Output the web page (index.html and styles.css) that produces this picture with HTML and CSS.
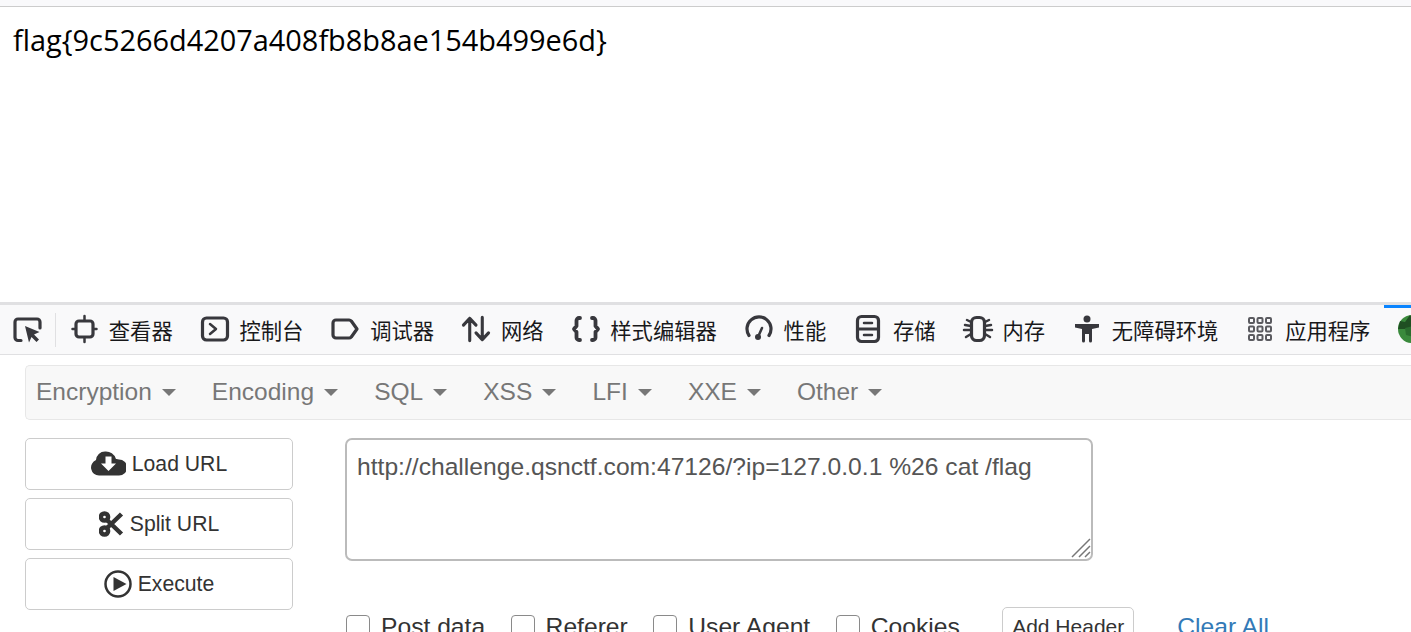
FILE: index.html
```html
<!DOCTYPE html>
<html lang="en">
<head>
  <meta charset="UTF-8" />
  <meta name="viewport" content="width=device-width, initial-scale=1" />
  <title>flag</title>
  <link rel="stylesheet" href="styles.css">
</head>
<body>

<div class="browser-edge"></div>
<div class="page-output">flag{9c5266d4207a408fb8b8ae154b499e6d}</div>

<div class="devtools">
  <div class="tabs">
    <div class="picker">
      <svg width="29" height="26" viewBox="0 0 29 26">
        <path class="ic" d="M8 23.500H5a3 3 0 0 1-3-3V5a3 3 0 0 1 3-3h19a3 3 0 0 1 3 3v6"/>
        <path class="ic-fill" d="M12 9l14.500 6-5.500 2.500 5 5-2.500 2.500-5-5-2.500 5.500z"/>
      </svg>
    </div>
    <div class="tab">
      <svg width="26" height="28" viewBox="0 0 26 28">
        <rect class="ic" x="5" y="6" width="17" height="16" rx="3"/>
        <path class="ic-thin" d="M13.500 1v4M13.500 23v4M1.500 14h3M22.500 14h3"/>
      </svg>
      <span>查看器</span>
    </div>
    <div class="tab">
      <svg width="28" height="26" viewBox="0 0 28 26">
        <rect class="ic" x="1.500" y="2" width="25" height="22" rx="4"/>
        <path class="ic-thin" d="M9 8l6 5-6 5"/>
      </svg>
      <span>控制台</span>
    </div>
    <div class="tab">
      <svg width="28" height="22" viewBox="0 0 28 22">
        <path class="ic" d="M5 2h13a3 3 0 0 1 2.300 1L26 11l-5.700 8a3 3 0 0 1-2.300 1H5a3 3 0 0 1-3-3V5a3 3 0 0 1 3-3z"/>
      </svg>
      <span>调试器</span>
    </div>
    <div class="tab">
      <svg width="29" height="28" viewBox="0 0 29 28">
        <path class="ic" d="M8 26V3M1.500 10L8 3l6.500 7M21 2v23M14.500 18l6.500 7 6.500-7"/>
      </svg>
      <span>网络</span>
    </div>
    <div class="tab">
      <svg width="26" height="26" viewBox="0 0 26 26">
        <path class="ic ic-bold" d="M7 2H6a2.500 2.500 0 0 0-2.500 2.500v5.500L1 13l2.500 3v5.500A2.500 2.500 0 0 0 6 24h1M19 2h1a2.500 2.500 0 0 1 2.500 2.500v5.500L25 13l-2.500 3v5.500A2.500 2.500 0 0 1 20 24h-1"/>
      </svg>
      <span>样式编辑器</span>
    </div>
    <div class="tab">
      <svg width="28" height="26" viewBox="0 0 28 26">
        <path class="ic" d="M4 19.500A12 12 0 1 1 24 19.500"/>
        <circle class="ic-fill" cx="13" cy="21" r="3"/>
        <path class="ic-thin" d="M13 21l4-9"/>
      </svg>
      <span>性能</span>
    </div>
    <div class="tab">
      <svg width="24" height="28" viewBox="0 0 24 28">
        <rect class="ic" x="1.500" y="1.500" width="21" height="25" rx="4"/>
        <path class="ic" d="M2 14h20"/>
        <path class="ic-thin" d="M8 8h8M8 20h8"/>
      </svg>
      <span>存储</span>
    </div>
    <div class="tab">
      <svg width="28" height="26" viewBox="0 0 28 26">
        <rect class="ic" x="7.500" y="1.500" width="13" height="23" rx="5"/>
        <path class="ic-thin" d="M7 6L3 4M7 10L1 9M7 14H0M7 18l-5 3M21 6l4-2M21 10l6-1M21 14h7M21 18l5 3"/>
      </svg>
      <span>内存</span>
    </div>
    <div class="tab">
      <svg width="26" height="28" viewBox="0 0 26 28">
        <circle class="ic-fill" cx="13" cy="4" r="3.500"/>
        <path class="ic-fill" d="M1 9h24v3.500l-7 1.500v12a1.500 1.500 0 0 1-3 0v-7h-4v7a1.500 1.500 0 0 1-3 0V14l-7-1.500z"/>
      </svg>
      <span>无障碍环境</span>
    </div>
    <div class="tab">
      <svg width="24" height="24" viewBox="0 0 24 24">
        <g class="ic-grid">
          <rect x="1" y="1" width="5" height="5" rx="1"/><rect x="9.500" y="1" width="5" height="5" rx="1"/><rect x="18" y="1" width="5" height="5" rx="1"/>
          <rect x="1" y="9.500" width="5" height="5" rx="1"/><rect x="9.500" y="9.500" width="5" height="5" rx="1"/><rect x="18" y="9.500" width="5" height="5" rx="1"/>
          <rect x="1" y="18" width="5" height="5" rx="1"/><rect x="9.500" y="18" width="5" height="5" rx="1"/><rect x="18" y="18" width="5" height="5" rx="1"/>
        </g>
      </svg>
      <span>应用程序</span>
    </div>
    <div class="tab tab-active">
      <svg width="28" height="28" viewBox="0 0 28 28">
        <circle cx="14" cy="14" r="14" fill="#3a8a3c"/>
        <path d="M2 6l5 1 5-7 4 6 8-2 3 10H0z" fill="#1f4f22"/>
        <path d="M7 13l8-2 5 5-4 6-8-2z" fill="#2a6d2e"/>
      </svg>
    </div>
  </div>
</div>

<div class="hackbar">
  <nav class="menu">
    <span class="menu-item">Encryption<i class="caret"></i></span>
    <span class="menu-item">Encoding<i class="caret"></i></span>
    <span class="menu-item">SQL<i class="caret"></i></span>
    <span class="menu-item">XSS<i class="caret"></i></span>
    <span class="menu-item">LFI<i class="caret"></i></span>
    <span class="menu-item">XXE<i class="caret"></i></span>
    <span class="menu-item">Other<i class="caret"></i></span>
  </nav>

  <div class="panel">
    <div class="actions">
      <button class="btn">
        <svg width="35" height="25" viewBox="0 0 35 25">
          <path fill="#333" d="M8 24.500a8 8 0 0 1-3-15.400A9 9 0 0 1 14 .5a10.500 10.500 0 0 1 11 7.500 6 6 0 0 1 3 .5 8 8 0 0 1 0 16z"/>
          <path fill="#fff" d="M14.500 5.500h6v7h4.500l-7.500 7.500-7.500-7.500h4.500z"/>
        </svg>
        Load URL
      </button>
      <button class="btn">
        <svg width="25" height="26" viewBox="0 0 25 26">
          <circle class="blade" cx="5.500" cy="6" r="3.600"/>
          <circle class="blade" cx="5.500" cy="20" r="3.600"/>
          <path class="blade" d="M8 9L22.500 23M8 17L22.500 3"/>
        </svg>
        Split URL
      </button>
      <button class="btn">
        <svg width="28" height="28" viewBox="0 0 28 28">
          <circle cx="14" cy="14" r="12.500" fill="none" stroke="#333" stroke-width="2.500"/>
          <path fill="#333" d="M9.500 7l13 7-13 7z"/>
        </svg>
        Execute
      </button>
    </div>

    <div class="request">
      <div class="url-box">
        <textarea class="url" spellcheck="false">http://challenge.qsnctf.com:47126/?ip=127.0.0.1 %26 cat /flag</textarea>
        <svg class="grip" width="20" height="20" viewBox="0 0 20 20">
          <path d="M1 19L19 1M8 19L19 8M14 19l5-5" stroke="#777" stroke-width="1.500" fill="none"/>
        </svg>
      </div>
      <div class="options">
        <label class="check"><input type="checkbox">Post data</label>
        <label class="check"><input type="checkbox">Referer</label>
        <label class="check"><input type="checkbox">User Agent</label>
        <label class="check"><input type="checkbox">Cookies</label>
        <button class="btn-small">Add Header</button>
        <a class="clear" href="#">Clear All</a>
      </div>
    </div>
  </div>
</div>

</body>
</html>
```

FILE: styles.css
```css
html, body { height: 632px; overflow: hidden; }
body {
  margin: 0; background: #fff; color: #333;
  font-family: "Liberation Sans", Arial, sans-serif;
}

.browser-edge { height: 6px; background: #f9f9fb; border-bottom: 1px solid #ccc; }
.page-output {
  height: 295px; box-sizing: border-box; padding: 14px 0 0 13px;
  font-family: "Open Sans", "Noto Sans", sans-serif; font-size: 28.900px; line-height: 38px; color: #000;
}

.devtools {
  height: 49px; background: #f9f9fa;
  border-top: 3px solid #e0e0e2; border-bottom: 1px solid #e0e0e2;
  overflow: hidden;
}
.tabs { display: flex; align-items: center; height: 49px; }
.picker {
  display: flex; align-items: center; flex-shrink: 0; width: 42px; height: 34px; margin-left: 13px;
  border-right: 1px solid #e0e0e2;
}
.tab {
  display: flex; align-items: center; gap: 10.800px; height: 49px; padding: 0 14px 1px; box-sizing: border-box; flex-shrink: 0;
  font-family: "Noto Sans CJK SC", sans-serif; font-size: 21.300px; color: #18181a;
}
.tab svg { flex-shrink: 0; width: 28px; overflow: visible; }
.tab-active { position: relative; }
.tab-active::before {
  content: ""; position: absolute; top: 0; left: 0; right: 0; height: 3px; background: #0a84ff;
}
.ic { fill: none; stroke: #38383d; stroke-width: 3.200; stroke-linecap: round; stroke-linejoin: round; }
.ic-bold { stroke-width: 3.800; }
.ic-thin { fill: none; stroke: #38383d; stroke-width: 2.500; stroke-linecap: round; stroke-linejoin: round; }
.ic-fill { fill: #38383d; }
.ic-grid rect { fill: none; stroke: #5b5b60; stroke-width: 2; }

.hackbar { padding: 10px 0 0 25px; }
.menu {
  display: flex; height: 51px; padding: 0 0 2px 10px; gap: 36.100px; align-items: center;
  background: #f8f8f8; border: 1px solid #e7e7e7; border-right: 0; border-radius: 5px 0 0 5px;
  font-size: 24.500px; color: #777;
}
.menu-item { display: flex; align-items: center; }
.caret {
  width: 0; height: 0; margin-left: 10px; margin-top: 2px;
  border-top: 7px solid #777; border-left: 7px solid transparent; border-right: 7px solid transparent;
}

.panel { display: flex; gap: 52px; margin-top: 18px; }
.actions { display: flex; flex-direction: column; gap: 8.500px; width: 268px; flex-shrink: 0; }
.btn {
  display: flex; align-items: center; justify-content: center; gap: 6px;
  height: 51.500px; background: #fff; border: 1px solid #ccc; border-radius: 5px;
  font-family: inherit; font-size: 21.200px; color: #333; padding: 0;
}
.blade { fill: none; stroke: #333; stroke-width: 4.500; }

.request { width: 748px; flex-shrink: 0; }
.url-box { position: relative; height: 123px; }
.url {
  display: block; box-sizing: border-box; width: 100%; height: 123px; padding: 9px 10px; margin: 0;
  border: 2px solid #bbb; border-radius: 7px; outline: none; resize: none;
  font-family: inherit; font-size: 24.650px; line-height: 35px; color: #555;
}
.grip { position: absolute; right: 2px; bottom: 3px; }
.options { display: flex; align-items: flex-start; margin-top: 46px; font-size: 24.650px; white-space: nowrap; }
.check { display: flex; align-items: flex-start; flex-shrink: 0; margin-right: 24.500px; line-height: 34px; padding-top: 3px; }
.check input {
  appearance: none; width: 24px; height: 24px; margin: 5px 11px 0 1px; box-sizing: border-box;
  border: 1px solid #8a8a8a; border-radius: 4px; background: #fff;
}
.btn-small {
  flex-shrink: 0; margin-left: 18px; height: 40px; width: 132px; padding: 0 0 1px; background: #fff;
  border: 1px solid #ccc; border-radius: 5px; font-family: inherit; font-size: 21px; color: #333;
}
.clear { flex-shrink: 0; margin-left: 43px; margin-top: 3px; color: #337ab7; text-decoration: none; line-height: 34px; }
```
